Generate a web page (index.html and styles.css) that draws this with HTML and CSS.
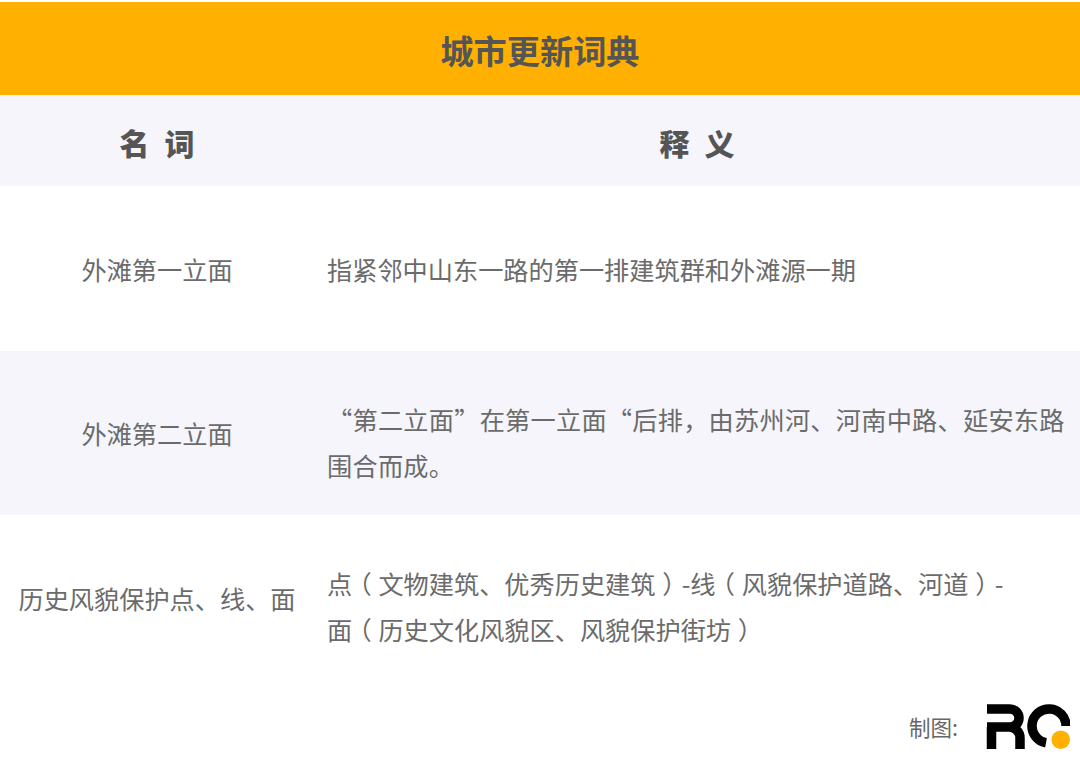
FILE: index.html
```html
<!DOCTYPE html>
<html lang="zh">
<head>
<meta charset="utf-8">
<title>城市更新词典</title>
<link rel="stylesheet" href="styles.css">
</head>
<body>
<div class="page">
  <h1 class="title">城市更新词典</h1>
  <div class="row head">
    <div class="term">名 词</div>
    <div class="def center">释 义</div>
  </div>
  <div class="row body">
    <div class="term">外滩第一立面</div>
    <div class="def">指紧邻中山东一路的第一排建筑群和外滩源一期</div>
  </div>
  <div class="row body tint">
    <div class="term">外滩第二立面</div>
    <div class="def lower wide">“第二立面”在第一立面“后排，由苏州河、河南中路、延安东路围合而成。</div>
  </div>
  <div class="row body last">
    <div class="term">历史风貌保护点、线、面</div>
    <div class="def lower-last">点<span class="paren">（</span>文物建筑、优秀历史建筑<span class="paren">）</span>-线<span class="paren">（</span>风貌保护道路、河道<span class="paren">）</span>-<br>面<span class="paren">（</span>历史文化风貌区、风貌保护街坊<span class="paren">）</span></div>
  </div>
  <div class="credit">
    <span class="credit-label">制图:</span>
    <svg class="logo" width="84" height="46" viewBox="0 0 84 46" aria-hidden="true">
      <path d="M1 5H24A9 9 0 0 1 24 23H1M5.500 23V45M23 23A11 11 0 0 1 34 34V45" fill="none" stroke="#000" stroke-width="9.500"/>
      <path d="M80 22A17 17 0 1 0 60 38.700" fill="none" stroke="#000" stroke-width="9.500"/>
      <circle cx="74.700" cy="35.700" r="9.300" fill="#ffb000"/>
    </svg>
  </div>
</div>
</body>
</html>
```
FILE: styles.css
```css
html, body {
  margin: 0;
  padding: 0;
  background: #fff;
}
.page {
  width: 1080px;
  height: 778px;
  padding-top: 2px;
  box-sizing: border-box;
  overflow: hidden;
  font-family: "Noto Sans CJK SC", "Noto Sans", sans-serif;
  color: #6b6b6b;
  font-size: 25.2px;
  line-height: 45.5px;
}
.title {
  margin: 0;
  height: 93px;
  background: #ffb000;
  color: #555;
  font-size: 33.2px;
  font-weight: 700;
  line-height: 96px;
  text-align: center;
}
.row {
  display: grid;
  grid-template-columns: 314px 1fr;
  align-items: center;
  box-sizing: border-box;
}
.head {
  height: 91px;
  padding-top: 4px;
  background: #f5f5fb;
  color: #555;
  font-size: 30px;
  font-weight: 900;
}
.head .term {
  word-spacing: 8px;
}
.body {
  height: 165px;
  padding-top: 2px;
}
.tint {
  background: #f5f5fb;
  height: 164px;
}
.last {
  height: 166px;
}
.term {
  text-align: center;
  white-space: nowrap;
}
.def {
  padding-left: 13px;
  padding-right: 6px;
}
.def.center {
  text-align: center;
  padding: 0;
  word-spacing: 8px;
}
.def.lower {
  padding-top: 17px;
}
.def.lower-last {
  padding-top: 15px;
}
.def.wide {
  letter-spacing: 0.25px;
}
.paren {
  font-feature-settings: "halt";
  padding: 0 0.27em;
}
.credit {
  display: flex;
  justify-content: flex-end;
  align-items: center;
  gap: 28px;
  padding-right: 10px;
  margin-top: 23px;
}
.credit-label {
  font-size: 21.5px;
  line-height: 46px;
  color: #666;
}
.logo {
  display: block;
}
```
